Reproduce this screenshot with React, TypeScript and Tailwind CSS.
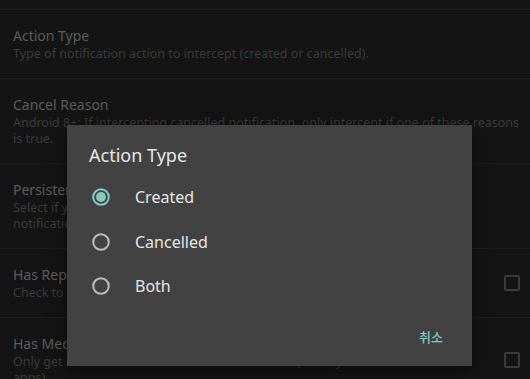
import React from "react";

const font = { fontFamily: '"Noto Sans", "Noto Sans CJK KR", sans-serif' };

function Row({
  title,
  lines,
  checkbox,
}: {
  title: string;
  lines: string[];
  checkbox?: boolean;
}) {
  return (
    <div className="flex items-center border-b border-[#1e1e1e] pl-[13px] pr-[10px] py-[16px]">
      <div className="flex-1 min-w-0">
        <div className="text-[14px] leading-[20px] text-[#5c5c5c] whitespace-nowrap">{title}</div>
        {lines.map((l, i) => (
          <div key={i} className="text-[12.5px] leading-[16px] text-[#3b3b3b] whitespace-nowrap overflow-hidden">
            {l}
          </div>
        ))}
      </div>
      {checkbox && <div className="w-[16px] h-[16px] border-2 border-[#3a3a3a] rounded-[2px] shrink-0" />}
    </div>
  );
}

function Radio({ checked }: { checked?: boolean }) {
  return (
    <svg width="20" height="20" viewBox="0 0 20 20">
      <circle cx="10" cy="10" r="7.8" fill="none" stroke={checked ? "#80cbc4" : "#bdbdbd"} strokeWidth="2" />
      {checked && <circle cx="10" cy="10" r="5" fill="#80cbc4" />}
    </svg>
  );
}

export default function App() {
  const options = [
    { label: "Created", checked: true },
    { label: "Cancelled" },
    { label: "Both" },
  ];
  return (
    <div className="relative w-[530px] h-[379px] overflow-hidden bg-[#141414]" style={font}>
      <div className="h-[10px] border-b border-[#1e1e1e]" />
      <Row title="Action Type" lines={["Type of notification action to intercept (created or cancelled)."]} />
      <Row
        title="Cancel Reason"
        lines={[
          "Android 8+: If intercepting cancelled notification, only intercept if one of these reasons",
          "is true.",
        ]}
      />
      <Row
        title="Persistency"
        lines={["Select if you want to intercept only persistent or non-persistent", "notifications or both."]}
      />
      <Row title="Has Reply Action" lines={["Check to only intercept notifications that have a reply action"]} checkbox />
      <Row
        title="Has Media Session"
        lines={["Only get notifications that have a media session (usually from media", "apps)."]}
        checkbox
      />

      <div className="absolute left-[67px] top-[125px] w-[405px] h-[241px] bg-[#424242] flex flex-col shadow-[0_4px_16px_rgba(0,0,0,0.5)]">
        <div className="pl-[22px] pt-[18px] h-[50px] text-[18px] leading-[24px] text-[#e8e8e8]">Action Type</div>
        <div className="flex flex-col">
          {options.map((o) => (
            <div key={o.label} className="h-[44.5px] flex items-center pl-[24px]">
              <Radio checked={o.checked} />
              <span className="ml-[24px] text-[16px] text-[#e6e6e6]">{o.label}</span>
            </div>
          ))}
        </div>
        <div className="flex justify-end pr-[13px] mt-[11px]">
          <div className="h-[36px] px-[16px] flex items-center text-[13px] text-[#80cbc4] font-medium">취소</div>
        </div>
      </div>
    </div>
  );
}
